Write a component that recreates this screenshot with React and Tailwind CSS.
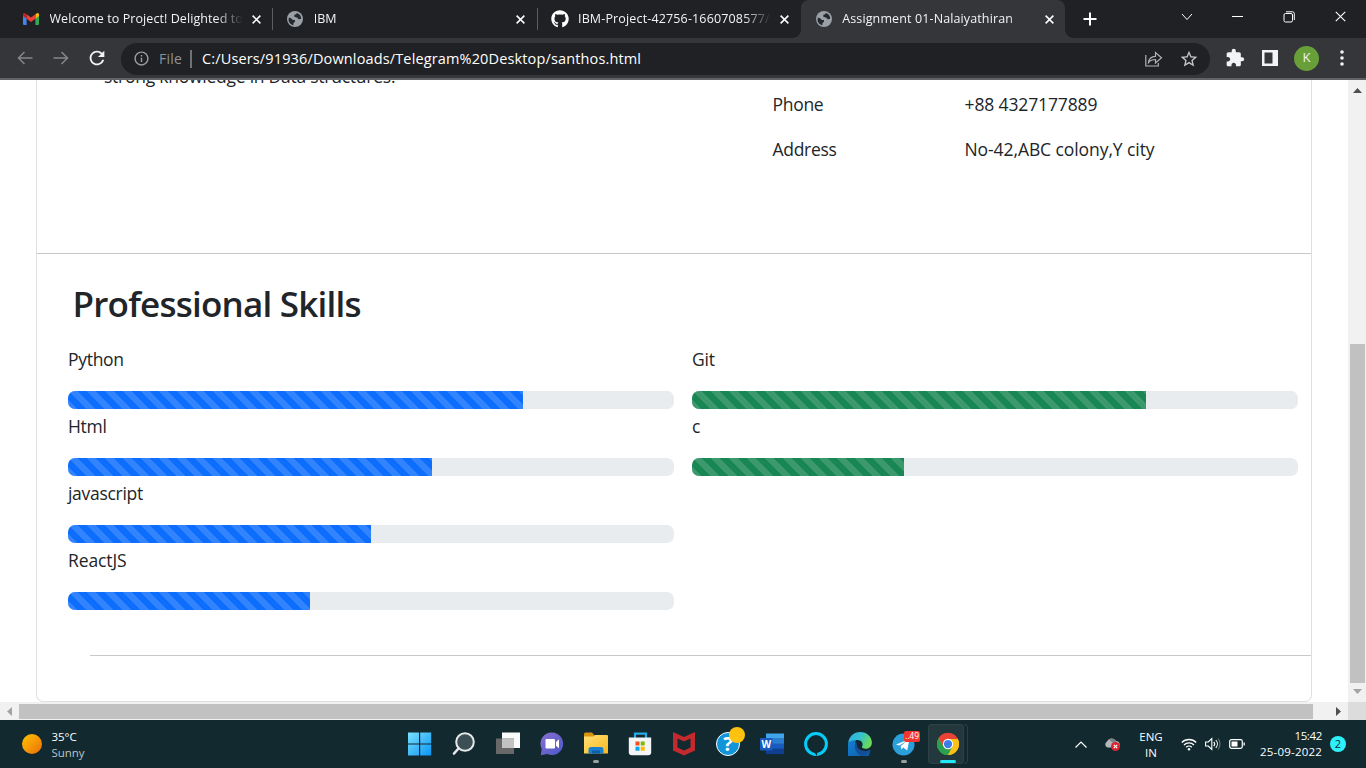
import React from 'react';
import { FaGithub } from 'react-icons/fa';
import { MdExtension, MdStarBorder, MdRefresh, MdInfoOutline } from 'react-icons/md';

const Close = ({ className = 'size-[10px]', w = 1.7 }) => (
  <svg viewBox="0 0 10 10" className={className} fill="none" stroke="currentColor" strokeWidth={w}>
    <path d="M.7.7l8.6 8.6M9.3.7L.7 9.3" />
  </svg>
);

const Gmail = () => (
  <svg viewBox="0 0 16 12" className="h-3 w-4">
    <path d="M0 1.5V11a1 1 0 001 1h2.600V5z" fill="#4285f4" />
    <path d="M16 1.500V11a1 1 0 01-1 1h-2.600V5z" fill="#34a853" />
    <path d="M12.400 1.200L14 .2a1.300 1.300 0 012 1.200V3l-3.600 2.700z" fill="#fbbc04" />
    <path d="M0 3V1.400A1.300 1.300 0 012 .2l1.600 1V5.700z" fill="#c5221f" />
    <path d="M3.600 1.200L8 4.600l4.400-3.400v4.500L8 9 3.600 5.700z" fill="#ea4335" />
  </svg>
);

const Globe = () => (
  <svg viewBox="0 0 16 16" className="size-4 shrink-0">
    <circle cx="8" cy="8" r="8" fill="#9aa0a6" />
    <path d="M1.800 6.800c1.700 0 2.500.6 3.200 1.400.6.800 1.800.7 3 .8v1.700c-.8.500-1.600 1-1.600 2.200 0 .8-.3 1.400-1 1.200A6.300 6.300 0 011.800 6.800z" fill="#26282b" />
    <path d="M9.500 1.900c.3 1.200-.4 1.500-1.500 1.700-1 .2-.7 1.200-.6 2 .2.800 1.200.8 2.300.8 1.200.1 1.200 1.300 2 1.800.8.400 1.600-.2 2.500-.4A6.300 6.300 0 009.500 1.900z" fill="#26282b" />
  </svg>
);

function Tab({ icon, title, textClass, active, sep }) {
  return (
    <div className={`relative flex h-[38px] w-[264.25px] items-center pl-[15px] pr-[11.500px] ${active ? 'rounded-t-lg bg-[#35363a]' : ''}`}>
      <span className="flex w-4 justify-center">{icon}</span>
      <div className="ml-[10.500px] w-[195px] overflow-hidden [mask-image:linear-gradient(90deg,#000_85%,transparent_99%)]">
        <span className={`block whitespace-nowrap text-[12.5px] leading-5 text-[#f1f3f4] ${textClass}`}>{title}</span>
      </div>
      <Close className="ml-auto size-[9px] text-white" />
      {sep && <span className="absolute -right-px top-[8px] h-[22px] w-px bg-[#5c5e62]" />}
      {active && (
        <>
          <span className="absolute -left-2 bottom-0 size-2 bg-[radial-gradient(circle_at_0_0,#202124_7.5px,#35363a_8px)]" />
          <span className="absolute -right-2 bottom-0 size-2 bg-[radial-gradient(circle_at_100%_0,#202124_7.5px,#35363a_8px)]" />
        </>
      )}
    </div>
  );
}

function TabStrip() {
  return (
    <div className="flex h-[38px] bg-[#202124] pl-2">
      <Tab icon={<Gmail />} title="Welcome to Project! Delighted to" textClass="tracking-[0.080px]" sep />
      <Tab icon={<Globe />} title="IBM" textClass="" sep />
      <Tab icon={<FaGithub className="size-[18px] shrink-0 text-white" />} title="IBM-Project-42756-1660708577/" textClass="tracking-[0.150px]" />
      <Tab icon={<Globe />} title="Assignment 01-Nalaiyathiran" textClass="tracking-[0.120px]" active />
      <div className="flex w-[46px] items-center justify-center pl-1 text-white">
        <svg viewBox="0 0 14 14" className="size-[14px]" stroke="currentColor" strokeWidth="2"><path d="M7 .5v13M.5 7h13" /></svg>
      </div>
      <div className="ml-auto flex h-[33px] items-center text-white">
        <span className="flex w-[51px] justify-center"><svg viewBox="0 0 12 8" className="h-2 w-3" fill="none" stroke="currentColor"><path d="M1 1l5 5.500L11 1" /></svg></span>
        <span className="flex w-[51px] justify-center"><span className="h-px w-[11px] bg-white" /></span>
        <span className="flex w-[51px] justify-center">
          <svg viewBox="0 0 12 12" className="size-3" fill="none" stroke="currentColor"><rect x="1" y="2.500" width="8.500" height="8.500" rx="1.500" /><path d="M3 .8h6.500a1.800 1.800 0 011.800 1.800V9" /></svg>
        </span>
        <span className="flex w-[52px] justify-center"><Close className="size-[11px]" w={1} /></span>
      </div>
    </div>
  );
}

function Toolbar() {
  return (
    <div className="flex h-[42px] items-center border-b-2 border-[#626366] bg-[#35363a] text-[#f1f3f4]">
      <svg viewBox="0 0 16 14" className="ml-[17px] h-[14px] w-4" fill="none" stroke="#85878a" strokeWidth="1.500"><path d="M15.500 7H1.500M7.500 1l-6 6 6 6" /></svg>
      <svg viewBox="0 0 16 14" className="ml-5 h-[14px] w-4" fill="none" stroke="#85878a" strokeWidth="1.500"><path d="M.5 7h14M8.500 1l6 6-6 6" /></svg>
      <MdRefresh className="ml-[17px] size-[22px]" />
      <div className="ml-[13px] mt-px flex h-8 w-[1089px] items-center rounded-full bg-[#202124] pl-3">
        <MdInfoOutline className="size-[17px] text-[#9aa0a6]" />
        <span className="ml-[9px] w-[27px] whitespace-nowrap text-[14px] leading-5 tracking-[0.200px] text-[#8e9398]">File</span>
        <span className="ml-[4px] h-[18px] w-[1.500px] bg-[#6f7377]" />
        <span className="ml-[10.500px] whitespace-nowrap text-[14.5px] leading-5 tracking-[0.140px] text-white">C:/Users/91936/Downloads/Telegram%20Desktop/santhos.html</span>
        <svg viewBox="0 0 18 16" className="ml-auto h-4 w-[18px]" fill="none" stroke="#b0b3b6" strokeWidth="1.200"><path d="M.8 4v11h12.500v-3M3.500 11.500c.5-4 3-6 7-6.200V1.500l6 5.300-6 5.200V8.500c-3 0-5.200.8-7 3z" /></svg>
        <MdStarBorder className="ml-[16px] mr-[11px] size-[20px] text-[#c4c6c9]" />
      </div>
      <MdExtension className="ml-[15px] size-5" />
      <svg viewBox="0 0 16 16" className="ml-[17px] size-4"><path d="M0 0h16v16H0zM2.500 2.500v11h8v-11z" fill="#f1f3f4" fillRule="evenodd" /></svg>
      <span className="ml-4 flex size-[25px] items-center justify-center rounded-full bg-[#689f38] text-[13px]">K</span>
      <svg viewBox="0 0 4 16" className="ml-[20.500px] h-4 w-1" fill="currentColor"><circle cx="2" cy="2" r="1.800" /><circle cx="2" cy="8" r="1.800" /><circle cx="2" cy="14" r="1.800" /></svg>
    </div>
  );
}

const stripes = 'bg-[linear-gradient(45deg,rgba(255,255,255,.15)_25%,transparent_25%,transparent_50%,rgba(255,255,255,.15)_50%,rgba(255,255,255,.15)_75%,transparent_75%)] bg-[length:18px_18px]';

function Skill({ name, value, color, track }) {
  return (
    <div className="mb-1">
      <p className={`h-[27px] text-[17.5px] leading-[27px] ${track}`}>{name}</p>
      <div className="mt-[18px] h-[18px] overflow-hidden rounded-[7px] bg-[#e9ecef]">
        <div className={`h-full ${color} ${stripes}`} style={{ width: `${value}%` }} />
      </div>
    </div>
  );
}

function Page() {
  return (
    <div className="h-full flex-1 overflow-hidden bg-white pl-9 pr-9">
      <div className="flex h-[622px] w-[1276px] flex-col rounded-b-[7px] border-x border-b border-[#dfdfdf] text-[#212529]">
        <div className="flex h-[173px] text-[17.5px] leading-[27px]">
          <p className="-mt-[17px] ml-[67px] w-[668.500px] tracking-[-0.250px]">strong knowledge in Data structures.</p>
          <dl className="mt-[11px] grid h-[72px] grid-cols-[192px_300px] gap-y-[18px] whitespace-nowrap">
            <dt className="tracking-[-0.3px]">Phone</dt><dd className="tracking-[-0.130px]">+88 4327177889</dd>
            <dt className="tracking-[-0.3px]">Address</dt><dd className="tracking-[-0.080px]">No-42,ABC colony,Y city</dd>
          </dl>
        </div>
        <div className="h-px shrink-0 bg-[#c8c8c9]" />
        <h1 className="ml-[35.500px] mt-7 h-[44px] whitespace-nowrap text-[35px] font-semibold leading-[43px] tracking-[-0.780px]">Professional Skills</h1>
        <div className="ml-[31px] mt-5 grid grid-cols-[606px_606px] gap-x-[18px]">
          <div>
            <Skill name="Python" value={75} color="bg-[#0d6efd]" track="tracking-[-0.3px]" />
            <Skill name="Html" value={60} color="bg-[#0d6efd]" track="tracking-[-0.3px]" />
            <Skill name="javascript" value={50} color="bg-[#0d6efd]" track="tracking-[-0.3px]" />
            <Skill name="ReactJS" value={40} color="bg-[#0d6efd]" track="tracking-[-0.100px]" />
          </div>
          <div>
            <Skill name="Git" value={74.9} color="bg-[#198754]" track="tracking-[-0.2px]" />
            <Skill name="c" value={35} color="bg-[#198754]" track="" />
          </div>
        </div>
        <div className="ml-[53px] mt-[41px] h-px shrink-0 bg-[#c8c8c9]" />
      </div>
    </div>
  );
}

function VerticalBar() {
  return (
    <div className="flex w-[18px] flex-col items-center bg-[#f1f1f1]">
      <svg viewBox="0 0 9 5" className="mt-2 h-[5px] w-[9px]"><path d="M4.500 0L9 5H0z" fill="#505050" /></svg>
      <div className="mt-[251px] h-[339px] w-[15px] bg-[#c1c1c1]" />
      <svg viewBox="0 0 9 5" className="mt-[6px] h-[5px] w-[9px]"><path d="M4.500 5L9 0H0z" fill="#a3a3a3" /></svg>
    </div>
  );
}

function HorizontalBar() {
  return (
    <div className="flex h-[18px] items-center bg-[#f1f1f1]">
      <svg viewBox="0 0 5 9" className="ml-[7px] h-[9px] w-[5px]"><path d="M0 4.500L5 0v9z" fill="#a3a3a3" /></svg>
      <div className="ml-[7px] mt-px h-[15px] w-[1294px] bg-[#c1c1c1]" />
      <svg viewBox="0 0 5 9" className="ml-[23px] h-[9px] w-[5px]"><path d="M5 4.500L0 0v9z" fill="#505050" /></svg>
      <div className="ml-auto h-full w-[18px] bg-[#dcdcdc]" />
    </div>
  );
}

const Svg = ({ children, s = 24 }) => <svg viewBox="0 0 24 24" width={s} height={s}>{children}</svg>;

const apps = [
  { id: 'start', icon: <Svg><defs><linearGradient id="win" x1="0" y1="0" x2="1" y2="1" gradientUnits="objectBoundingBox"><stop stopColor="#7be0fd" /><stop offset="1" stopColor="#0a95f5" /></linearGradient></defs><path d="M0 .5h11v11H0zM12.200.5h11v11h-11zM0 12.500h11v11H0zM12.200 12.500h11v11h-11z" fill="url(#win)" /></Svg> },
  { id: 'search', icon: <Svg><circle cx="13" cy="10" r="8.800" fill="#3c4f54" stroke="#e6e9ea" strokeWidth="2" /><path d="M6.500 16.500L2 21.500" stroke="#e6e9ea" strokeWidth="2.600" strokeLinecap="round" /></Svg> },
  { id: 'views', icon: <Svg><path d="M6 .5h18v15.500H6z" fill="#fafafa" /><path d="M0 6.500h18v15.500H0z" fill="#686868" /><path d="M6 6.500h12V16H6z" fill="#c2c2c2" /></Svg> },
  { id: 'chat', icon: <Svg><defs><linearGradient id="ch" x1="0" x2="1" y2="1"><stop stopColor="#8b6fd0" /><stop offset="1" stopColor="#4a58c8" /></linearGradient></defs><path d="M12 .5a11.300 11.300 0 11-4.800 21.600L.8 23.200 1.700 17A11.300 11.300 0 0112 .5z" fill="url(#ch)" /><rect x="5.500" y="7" width="9.500" height="9.500" rx="1.200" fill="#fff" /><path d="M16 10l3-2.700v9L16 13.700z" fill="#fff" /></Svg> },
  { id: 'files', dot: 'bg-[#9a9fa2] w-[6px]', icon: <Svg><defs><linearGradient id="fo" x2="1" y2="1"><stop stopColor="#ffe07a" /><stop offset="1" stopColor="#fbb81a" /></linearGradient></defs><path d="M0 6V2a1.500 1.500 0 011.500-1.500H8L11 4v4H0z" fill="#d8930a" /><path d="M0 4.500h9.500L11 3h12a1 1 0 011 1v17.500H0z" fill="url(#fo)" /><path d="M4.500 21.500v-4a2.500 2.500 0 012.500-2.500h10a2.500 2.500 0 012.500 2.500v4z" fill="#1b7fd0" /><path d="M8 18.500h8v3H8z" fill="#0d5ea8" /></Svg> },
  { id: 'store', icon: <Svg><path d="M7 6V1.700h11V6" fill="none" stroke="#29a9e8" strokeWidth="2.200" /><path d="M.8 5.500h22.400v14.800a3 3 0 01-3 3H3.800a3 3 0 01-3-3z" fill="#f2f4f5" /><path d="M7.500 9.500h4v4h-4z" fill="#f25022" /><path d="M12.700 9.500h4v4h-4z" fill="#7fba00" /><path d="M7.500 14.700h4v4h-4z" fill="#00a4ef" /><path d="M12.700 14.700h4v4h-4z" fill="#ffb900" /></Svg> },
  { id: 'shield', icon: <Svg><path d="M1 0l11 5L23 0v18.500l-11 5-11-5zM5.500 6.500v9l6.500 3 6.500-3v-9L12 9.500z" fill="#c22a2e" fillRule="evenodd" /></Svg> },
  { id: 'help', icon: <div className="relative"><span className="flex size-6 items-center justify-center rounded-full border-[1.500px] border-white bg-[#1295d8] text-[20px] font-bold leading-none text-white">?</span><span className="absolute -right-[5px] -top-[5px] size-4 rounded-full bg-[#ffc20e]" /></div> },
  { id: 'word', icon: <Svg><path d="M6 1.500h18v5.200H6z" fill="#41a5ee" /><path d="M6 6.700h18v5.200H6z" fill="#2b7cd3" /><path d="M6 11.900h18v5H6z" fill="#185abd" /><path d="M6 16.900h18v5.300H6z" fill="#103f91" /><rect y="6" width="12.500" height="12.500" rx="1" fill="#185abd" /><text x="6.300" y="15.800" textAnchor="middle" fontSize="10" fontWeight="700" fill="#fff">W</text></Svg> },
  { id: 'alexa', icon: <Svg><circle cx="12" cy="12" r="10.400" fill="none" stroke="#05cdf9" strokeWidth="3" /><path d="M12.500 24.500c-.2-2-1.200-3.500-3.300-4.300L13.500 20.500z" fill="#12292f" /></Svg> },
  { id: 'edge', icon: <Svg><defs><linearGradient id="e1" x2="1" y2=".35"><stop stopColor="#2faee6" /><stop offset=".55" stopColor="#35c1cf" /><stop offset="1" stopColor="#69db58" /></linearGradient><linearGradient id="e2" x2="1" y2="1"><stop stopColor="#1682d4" /><stop offset="1" stopColor="#0b559f" /></linearGradient></defs><path d="M.2 11C2 8 5 6.800 8.500 7.200 6.500 10 7 13.500 9 16c2.500 3 7 4 12.500 2.200.8-.3 1.200.3.700 1A12 12 0 11.200 11z" fill="url(#e2)" /><path d="M8 9.500C5.500 13 6.500 20 13 23.900 17.500 24 20.500 21.500 22.200 19.200c.5-.7.100-1.300-.7-1C14.500 20.500 8.500 17 8.800 12z" fill="#124f97" /><path d="M.2 11C1 4.500 6 .1 12 .1c7 0 11.900 4.900 11.900 10.400 0 4-3 6.300-6.200 6.300-2.700 0-4.300-1.200-3.600-2.300 1.200-1.900.6-6.500-5-6.500C5.500 7.900 1.500 9 .2 11z" fill="url(#e1)" /></Svg> },
  { id: 'telegram', dot: 'bg-[#9a9fa2] w-[6px]', icon: <div className="relative"><Svg><circle cx="11.500" cy="12.500" r="11" fill="#2b9fda" /><path d="M4 12.500L17.500 7l-2.300 11.500-4-3-2 2-.5-3.500 6-5-7.500 4.500z" fill="#fff" /></Svg><span className="absolute -top-px left-[12px] flex h-[11px] w-4 items-center justify-center rounded-[2px] bg-[#f4352f] text-[8.5px] leading-none text-white">..49</span></div> },
  { id: 'chrome', active: true, dot: 'bg-[#20e8f5] w-4', icon: <Svg s={22}><path d="M12 12L1.600 6A12 12 0 0122.400 6z" fill="#ea4335" /><path d="M12 12L22.400 6A12 12 0 0112 24z" fill="#fbc116" /><path d="M12 12V24A12 12 0 011.600 6z" fill="#34a853" /><path d="M12 6.500h10.700A12 12 0 0112 24l4.800-9.200zM1.600 6l5.600 8.800L12 6.500z" fill="#fbc116" /><path d="M12 6.500L7.200 14.800 1.600 6A12 12 0 0122.700 6.500z" fill="#ea4335" /><path d="M1.600 6l5.600 9L12 17.500 16.800 14.800 12 24A12 12 0 011.600 6z" fill="#2da04d" /><circle cx="12" cy="12" r="5.600" fill="#fff" /><circle cx="12" cy="12" r="4.500" fill="#3c7de8" /></Svg> },
];

function Taskbar() {
  return (
    <div className="flex h-12 bg-[#12292f] text-white">
      <div className="flex w-[398px] items-center pl-[22px]">
        <span className="size-5 rounded-full bg-linear-to-br from-[#fdc400] to-[#ea6c08]" />
        <div className="ml-[9.500px] mt-[2px] text-[11.5px] leading-4 tracking-[-0.050px]"><div>35°C</div><div className="text-[#bcc5c8]">Sunny</div></div>
      </div>
      {apps.map((a) => (
        <div key={a.id} className="relative flex h-12 w-11 shrink-0 items-center justify-center">
          {a.active && <span className="absolute left-0.5 top-1 h-10 w-9 rounded border border-white/5 bg-white/7" />}
          {a.active && <span className="absolute left-[38px] top-1 h-10 w-[4px] rounded-r border border-l-0 border-white/10" />}
          <div className="relative">{a.icon}</div>
          {a.dot && <span className={`absolute bottom-[5px] h-[3px] rounded-full ${a.dot}`} />}
        </div>
      ))}
      <div className="ml-auto flex items-center text-[11.5px] leading-4">
        <svg viewBox="0 0 12 7" className="h-[7px] w-3" fill="none" stroke="#fff" strokeWidth="1.200"><path d="M.5 6.500l5.500-5.500 5.500 5.500" /></svg>
        <svg viewBox="0 0 16 14" className="ml-[17px] h-[14px] w-4"><path d="M3.500 10.500A3.300 3.300 0 013 4.500 5 5 0 0112 4a3.500 3.500 0 012 6.500z" fill="#b3b7b9" /><path d="M5 2.500a5 5 0 017.500 2L9 6z" fill="#7b8386" /><circle cx="11.500" cy="9.500" r="4.500" fill="#d92530" /><path d="M9.800 7.800l3.400 3.400M13.200 7.800l-3.400 3.400" stroke="#fff" strokeWidth="1.100" /></svg>
        <div className="ml-[19px] mt-0.5 w-[24px] text-center">ENG<br />IN</div>
        <svg viewBox="0 0 16 13" className="ml-[18px] h-[13px] w-4" fill="none" stroke="#fff" strokeWidth="1.300"><path d="M.8 4.500a10.200 10.200 0 0114.400 0M3 7a7 7 0 0110 0M5.200 9.300a4 4 0 015.600 0" /><circle cx="8" cy="11.300" r="1.200" fill="#fff" stroke="none" /></svg>
        <svg viewBox="0 0 16 14" className="ml-2 h-[14px] w-4" fill="none" stroke="#fff" strokeWidth="1.100"><path d="M.6 5v4h2.700l3.500 3.500v-11L3.300 5zM8.800 4.800a3.500 3.500 0 010 4.400M10.800 3a6 6 0 010 8" /><path d="M13 1.500a8.500 8.500 0 010 11" stroke="#68777b" /></svg>
        <svg viewBox="0 0 16 10" className="ml-2 h-[10px] w-4"><rect x=".7" y=".7" width="12.600" height="8.600" rx="1.700" fill="none" stroke="#fff" strokeWidth="1.200" /><path d="M2.500 2.500h6v5h-6zM14.500 3.500h1.300v3h-1.300z" fill="#fff" /></svg>
        <div className="ml-[14px] w-[63px] whitespace-nowrap text-right"><div className="tracking-[-0.350px]">15:42</div><div className="tracking-[0.200px]">25-09-2022</div></div>
        <span className="ml-2 mr-[20px] flex size-4 items-center justify-center rounded-full bg-[#2df0fb] text-[11px] text-[#12292f]">2</span>
      </div>
    </div>
  );
}

export default function App() {
  return (
    <div className="flex h-[768px] w-[1366px] flex-col overflow-hidden bg-white font-['Open_Sans','Noto_Sans',sans-serif]">
      <TabStrip />
      <Toolbar />
      <div className="flex h-[622px]">
        <Page />
        <VerticalBar />
      </div>
      <HorizontalBar />
      <Taskbar />
    </div>
  );
}
